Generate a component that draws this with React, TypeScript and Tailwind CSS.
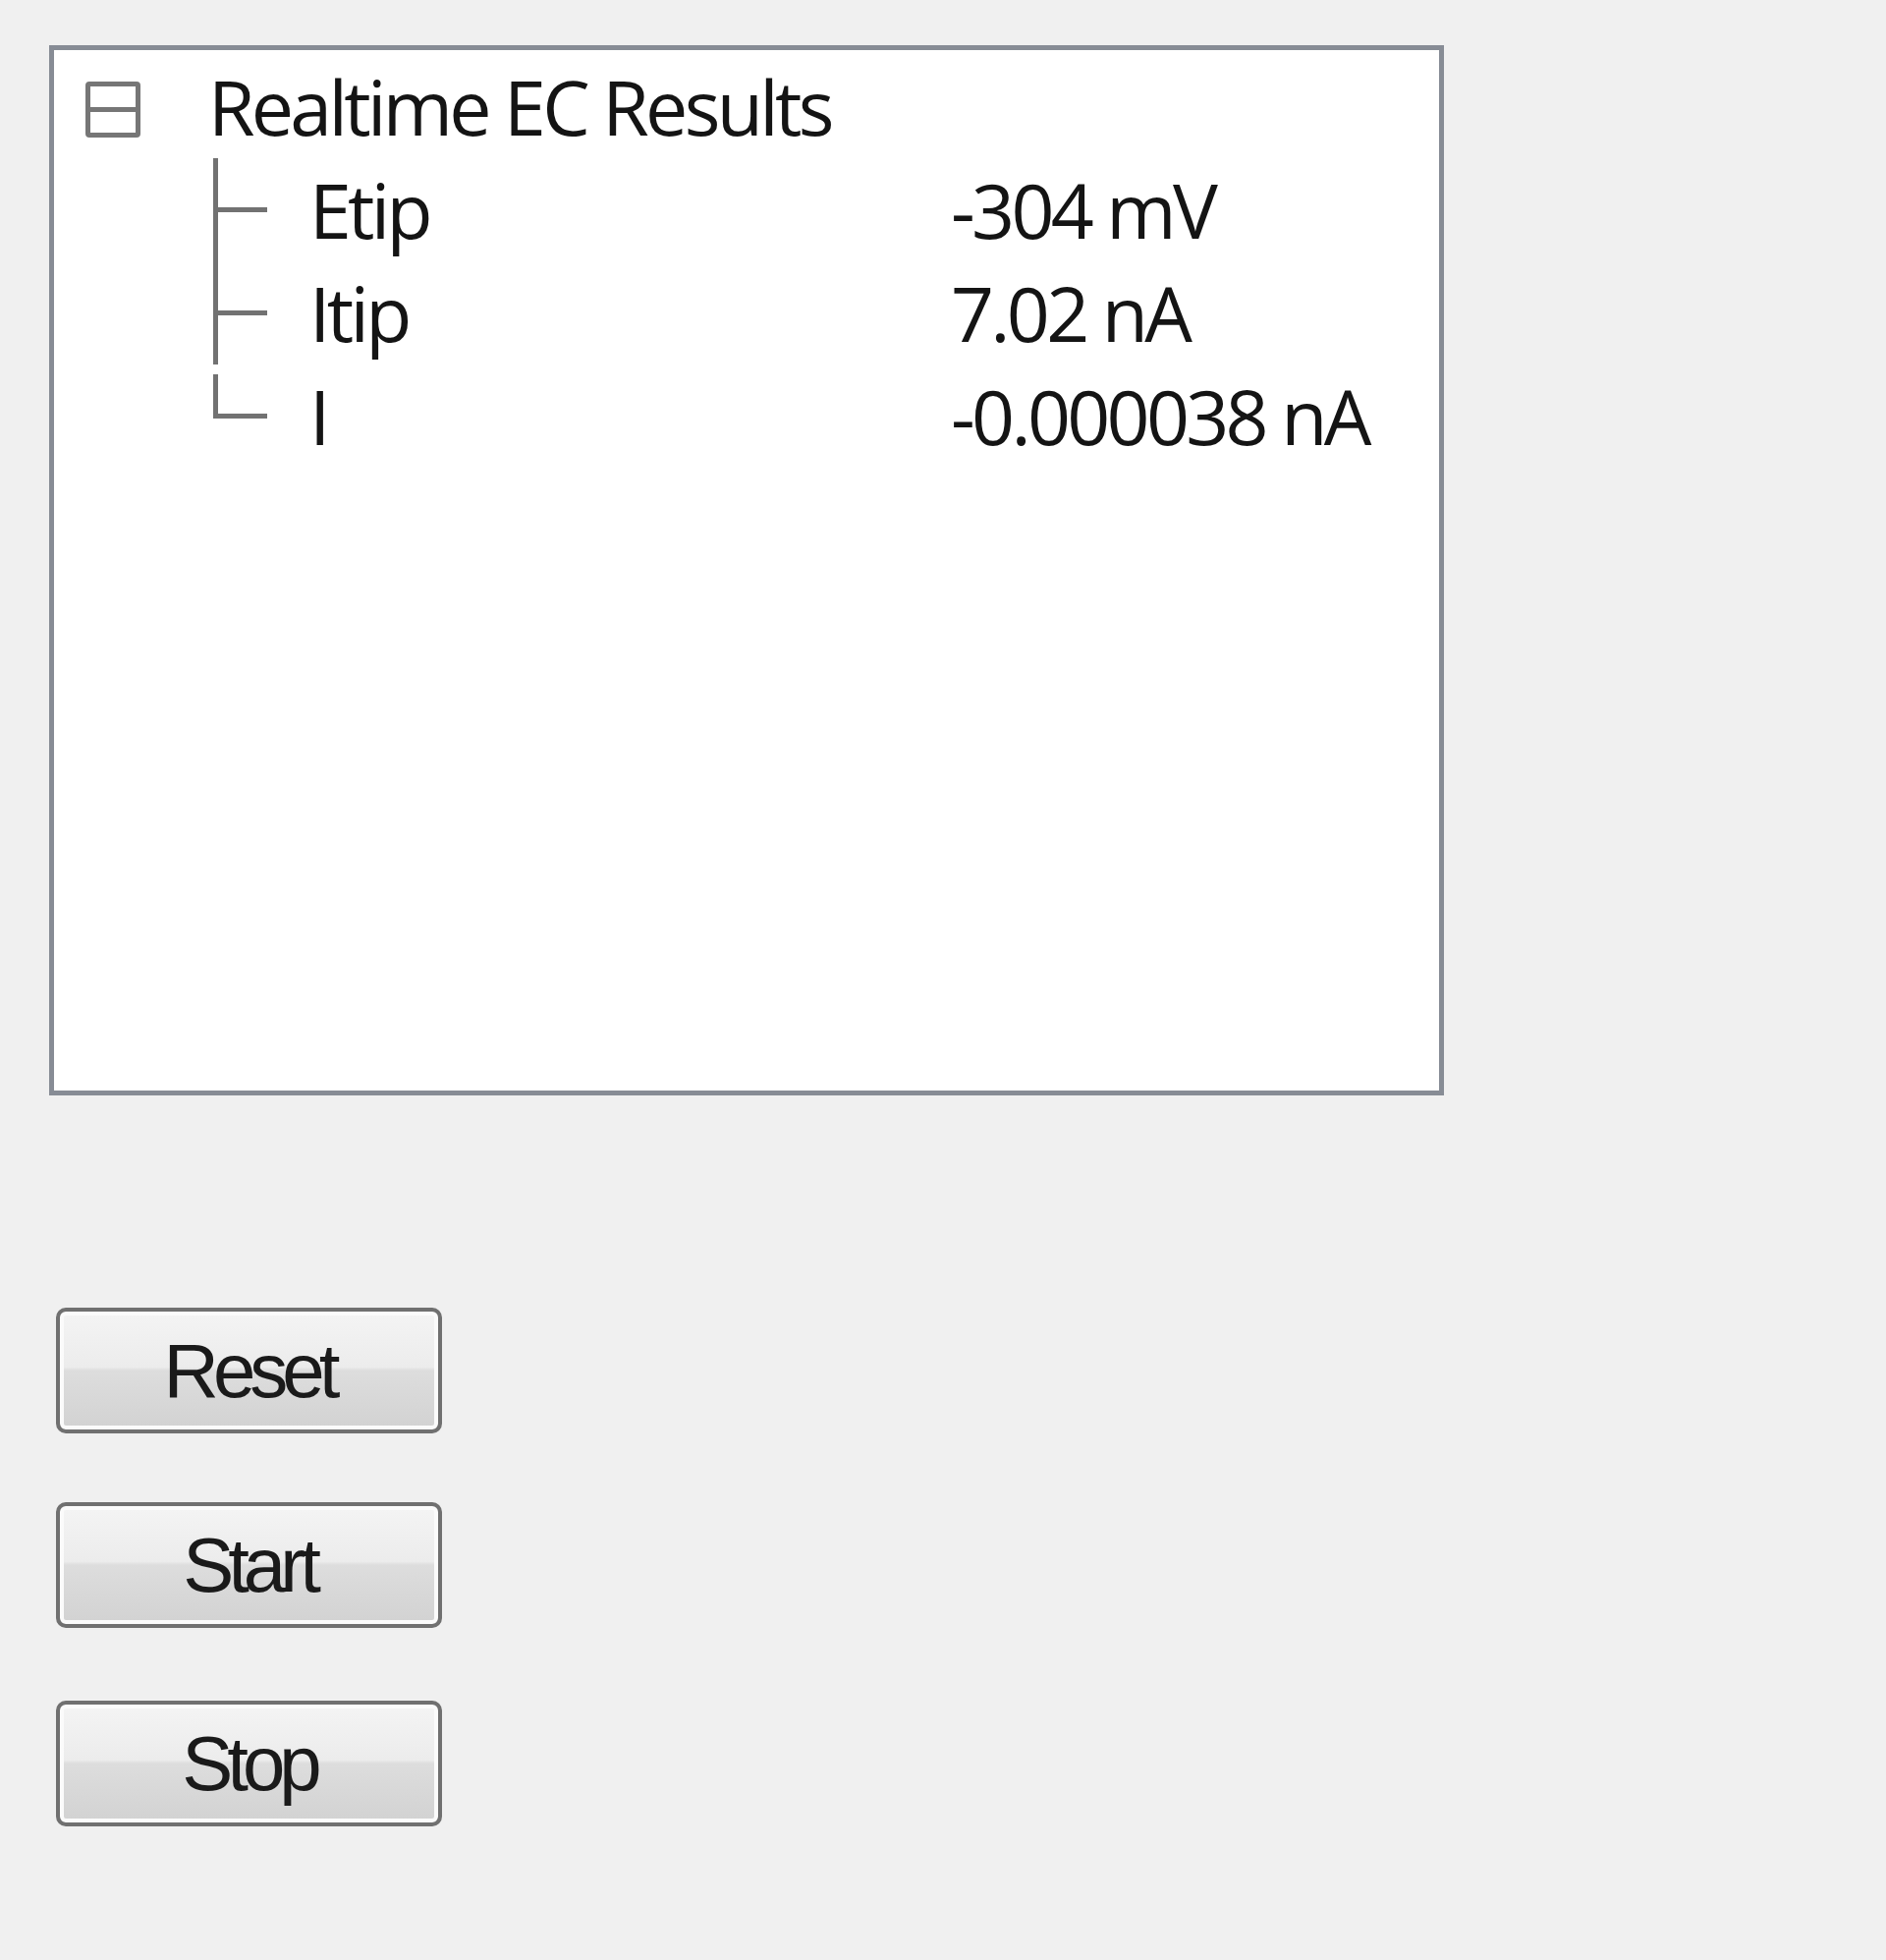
import React from "react";

type Row = { label: string; value: string };

const rows: Row[] = [
  { label: "Etip", value: "-304 mV" },
  { label: "Itip", value: "7.02 nA" },
  { label: "I", value: "-0.000038 nA" },
];

const treeFont =
  "font-['Open_Sans','Noto_Sans',sans-serif] font-medium text-[77px] leading-[105px] tracking-[-3.7px] text-[#141414]";

function Connector({ last }: { last: boolean }) {
  return (
    <div className="relative h-[105px] w-[55px] shrink-0">
      {/* vertical guide */}
      <div
        className={
          last
            ? "absolute left-0 top-[10px] h-[45px] w-[5px] bg-[#727272]"
            : "absolute left-0 top-0 h-[105px] w-[5px] bg-[#727272]"
        }
      />
      {/* tick */}
      <div className="absolute left-0 top-[50px] h-[5px] w-[55px] bg-[#727272]" />
    </div>
  );
}

function TreeRow({ row, last }: { row: Row; last: boolean }) {
  return (
    <div className="flex h-[105px] items-start">
      <div className="w-[162px] shrink-0" />
      <Connector last={last} />
      <div className={`ml-[43px] w-[653px] shrink-0 whitespace-nowrap ${treeFont}`}>{row.label}</div>
      <div className={`whitespace-nowrap ${treeFont}`}>{row.value}</div>
    </div>
  );
}

function FormButton({ label, className }: { label: string; className: string }) {
  return (
    <button
      className={`flex h-[128px] w-[393px] items-center justify-center rounded-[10px] border-[4px] border-[#707070] bg-[linear-gradient(to_bottom,#f4f4f4_0%,#ececec_47%,#dddddd_50%,#d2d2d2_100%)] shadow-[inset_0_0_0_4px_#fbfbfb] font-['Liberation_Sans',Arial,sans-serif] text-[78px] leading-none tracking-[-6px] text-[#1a1a1a] ${className}`}
    >
      {label}
    </button>
  );
}

export default function App() {
  return (
    <div className="min-h-[1995px] w-[1920px] bg-[#f0f0f0] pl-[50px] pt-[46px]">
      <div className="h-[1069px] w-[1420px] border-[5px] border-[#878c95] bg-white pt-[5px]">
        <div className="flex h-[105px] items-start">
          <div className="ml-[32px] mt-[27px] flex h-[57px] w-[56px] shrink-0 flex-col justify-center rounded-[4px] border-[5px] border-[#767676] bg-white">
            <div className="h-[5px] w-full bg-[#767676]" />
          </div>
          <div className={`ml-[69px] whitespace-nowrap ${treeFont}`}>Realtime EC Results</div>
        </div>
        {rows.map((row, i) => (
          <TreeRow key={row.label} row={row} last={i === rows.length - 1} />
        ))}
      </div>

      <div className="flex flex-col pl-[7px]">
        <FormButton label="Reset" className="mt-[216px]" />
        <FormButton label="Start" className="mt-[70px]" />
        <FormButton label="Stop" className="mt-[74px]" />
      </div>
    </div>
  );
}
